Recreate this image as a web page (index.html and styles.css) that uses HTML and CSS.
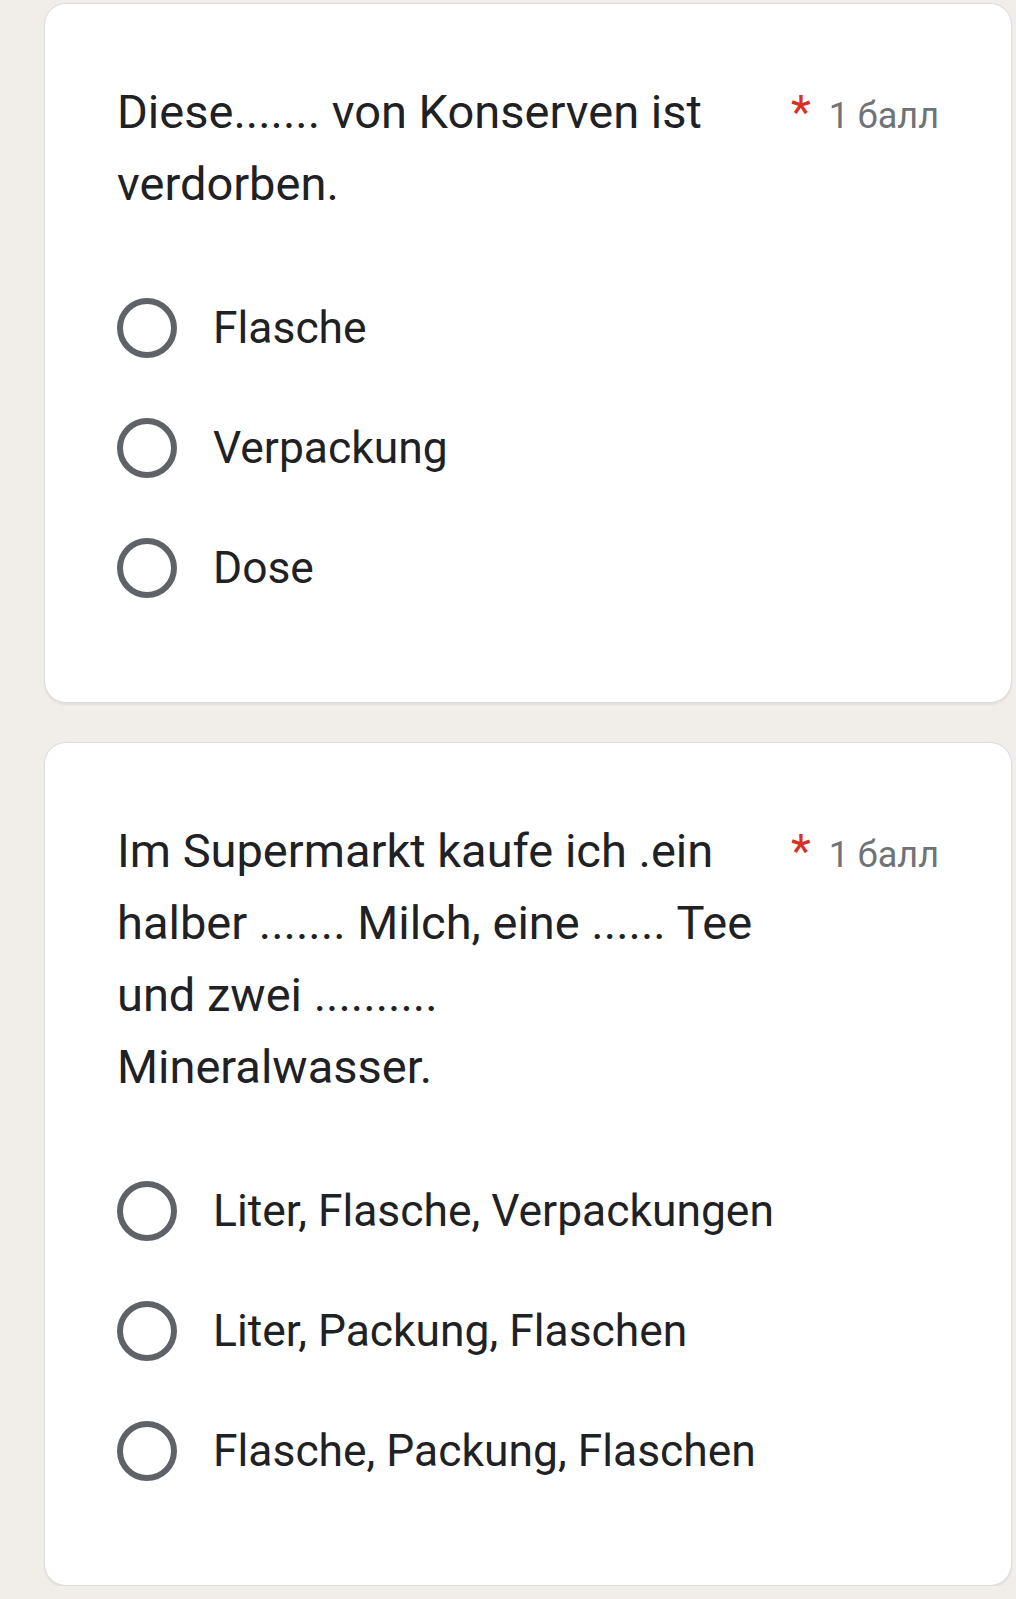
FILE: index.html
```html
<!DOCTYPE html>
<html lang="de">
<head>
<meta charset="utf-8">
<title>Form</title>
<link rel="stylesheet" href="styles.css">
</head>
<body>
<div class="page">
  <section class="card">
    <div class="head">
      <div class="title">Diese....... von Konserven ist verdorben.</div>
      <div class="meta"><span class="req">*</span><span class="points">1 балл</span></div>
    </div>
    <div class="options">
      <label class="option"><span class="radio"></span><span class="label">Flasche</span></label>
      <label class="option"><span class="radio"></span><span class="label">Verpackung</span></label>
      <label class="option"><span class="radio"></span><span class="label">Dose</span></label>
    </div>
  </section>
  <section class="card">
    <div class="head">
      <div class="title">Im Supermarkt kaufe ich .ein halber ....... Milch, eine ...... Tee und zwei ..........<br>Mineralwasser.</div>
      <div class="meta"><span class="req">*</span><span class="points">1 балл</span></div>
    </div>
    <div class="options">
      <label class="option"><span class="radio"></span><span class="label">Liter, Flasche, Verpackungen</span></label>
      <label class="option"><span class="radio"></span><span class="label">Liter, Packung, Flaschen</span></label>
      <label class="option"><span class="radio"></span><span class="label">Flasche, Packung, Flaschen</span></label>
    </div>
  </section>
</div>
</body>
</html>
```
FILE: styles.css
```css
html, body {
  margin: 0;
  padding: 0;
  background: #f1eeea;
}
body {
  font-family: Roboto, "Liberation Sans", Arial, sans-serif;
  color: #202124;
}
.page {
  padding: 3px 4px 0 44px;
  display: flex;
  flex-direction: column;
  gap: 39px;
}
.card {
  background: #ffffff;
  border: 1px solid #dadce0;
  border-radius: 22px;
  box-shadow: 0 2px 2px rgba(0, 0, 0, 0.06);
  padding: 72px 72px 74px 72px;
}
.head {
  display: flex;
  align-items: baseline;
  gap: 16px;
}
.title {
  flex: 1;
  font-size: 47px;
  line-height: 72px;
  color: #202124;
}
.meta {
  white-space: nowrap;
  display: flex;
  align-items: baseline;
}
.req {
  color: #d93025;
  font-size: 46px;
  margin-right: 18px;
}
.points {
  color: #6f7377;
  font-size: 36px;
}
.options {
  margin-top: 48px;
  display: flex;
  flex-direction: column;
}
.option {
  height: 120px;
  display: flex;
  align-items: center;
}
.radio {
  width: 60px;
  height: 60px;
  box-sizing: border-box;
  border: 6px solid #5f6368;
  border-radius: 50%;
  flex: none;
  margin-right: 36px;
}
.label {
  font-size: 44.4px;
  color: #202124;
}
```
